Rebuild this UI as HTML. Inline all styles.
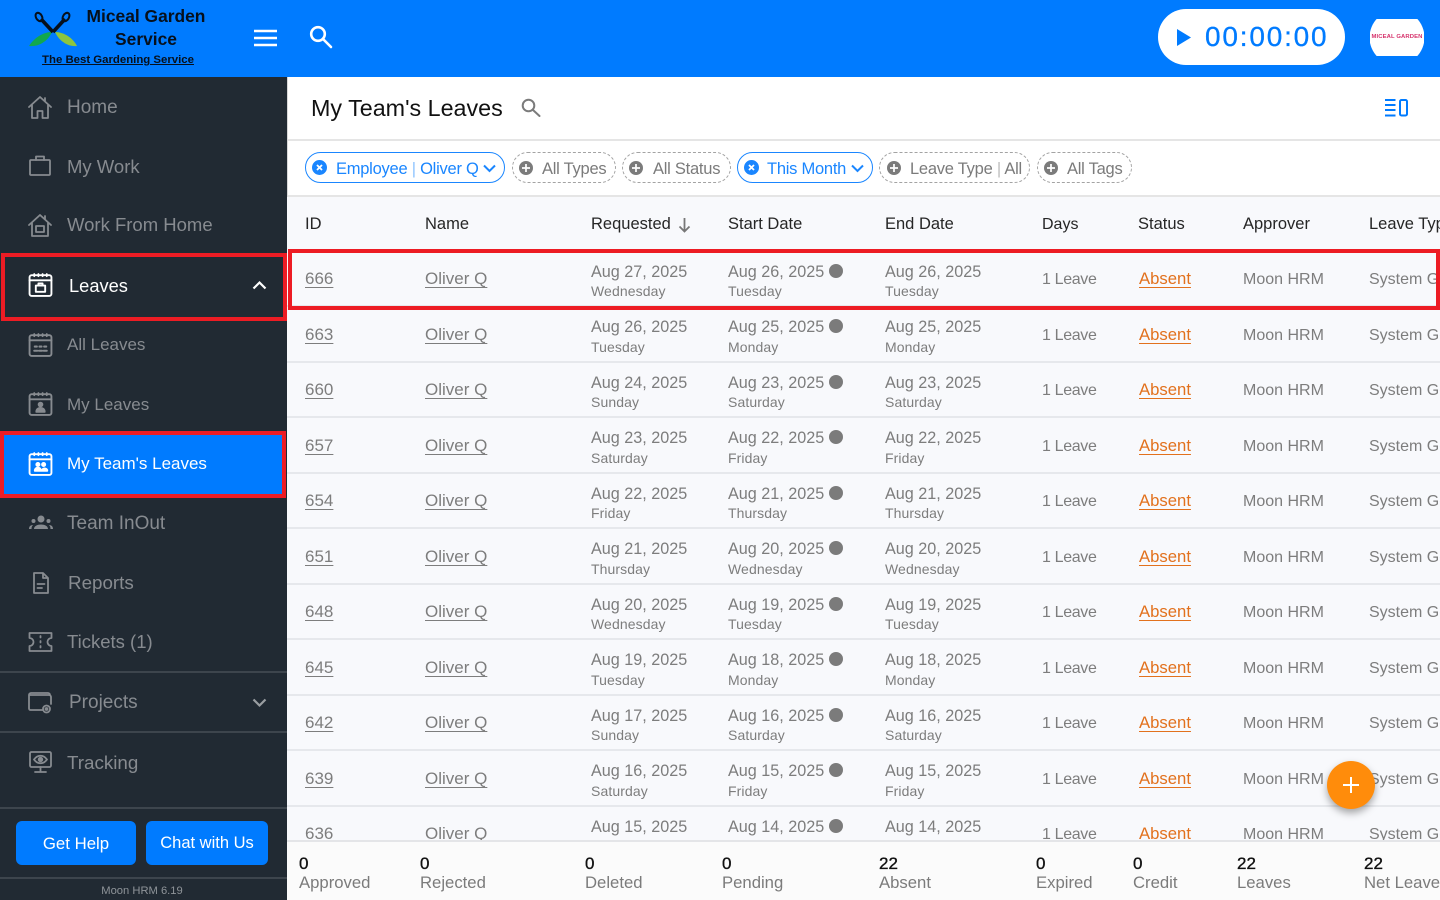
<!DOCTYPE html>
<html lang="en">
<head>
<meta charset="utf-8">
<title>My Team's Leaves</title>
<style>
*{box-sizing:border-box}
html,body{margin:0;padding:0;width:1440px;height:900px;overflow:hidden;background:#fff;font-family:"Liberation Sans",sans-serif}
.a{position:absolute}
#top{left:0;top:0;width:1440px;height:77px;background:#007bff}
.lg{left:60px;width:172px;text-align:center;color:#06101c;font-weight:700;font-size:17.4px;line-height:22px;white-space:nowrap}
#timer{left:1158px;top:9px;width:187px;height:56px;border-radius:28px;background:#fff}
#clock{left:1205px;top:20px;color:#007bff;font-size:28px;line-height:34px;letter-spacing:1.8px;white-space:nowrap;-webkit-text-stroke:.3px #007bff}
#side{left:0;top:77px;width:287px;height:823px;background:#212a33}
.n{position:absolute;color:#878b90;font-size:18.5px;line-height:24px;white-space:nowrap}
.w{color:#fff}
.sl{position:absolute;left:0;width:287px;height:2px;background:#3d454d}
.btn{position:absolute;top:821px;height:44px;background:#007bff;border-radius:6px;color:#fff;line-height:45px;text-align:center;white-space:nowrap}
.ic{position:absolute;fill:none;stroke:#878b90;stroke-width:1.8;stroke-linecap:round;stroke-linejoin:round}
.iw{stroke:#fff}
.chip{position:absolute;top:152px;height:31px;border-radius:16px;border:1.5px dashed #a3a3a3}
.on{border:1.5px solid #1a86ff}
.ct{position:absolute;top:159px;font-size:16.5px;letter-spacing:-.25px;line-height:20px;color:#7b7b7b;white-space:nowrap}
.cb{color:#1a86ff}
.th{position:absolute;top:214px;font-size:16.5px;line-height:20px;color:#262626;white-space:nowrap}
#t{left:287px;top:197px;width:1153px;height:643px;overflow:hidden;background:#f8f9fc}
.r{position:absolute;left:0;width:1153px;height:56px;border-bottom:2px solid #e6e8ec}
.r span,.r a{position:absolute;white-space:nowrap}
.m{top:19px;line-height:20px;font-size:16px;color:#7d7d7d}
.u{top:18px;font-size:17px;text-decoration:underline;text-underline-offset:3px;text-decoration-thickness:1px}
.s{color:#e2711d;left:852px;font-size:16.7px}
.d{top:10px;line-height:20px;font-size:16.2px;color:#7d7d7d}
.r.x .d{top:11px}
.e{top:31px;line-height:18px;font-size:14px;color:#7d7d7d;letter-spacing:.1px}
.o{display:inline-block;width:14px;height:14px;border-radius:50%;background:#7b7b7b;margin-left:5px;vertical-align:-1px}
.c1{left:18px}.c2{left:138px}.c3{left:304px}.c4{left:441px}.c5{left:598px}.c6{left:755px;letter-spacing:-.35px}.c8{left:956px}.c9{left:1082px}
#foot{left:287px;top:840px;width:1153px;height:60px;background:#fbfbfb;border-top:2px solid #e4e5e8}
.fn{position:absolute;top:854px;font-size:17px;line-height:20px;color:#111;white-space:nowrap;-webkit-text-stroke:.35px #111}
.fl{position:absolute;top:873px;font-size:16.7px;line-height:20px;color:#7b7b7b;white-space:nowrap}
.box{position:absolute;border:4px solid #ed1c24;pointer-events:none}
#fab{left:1327px;top:761px;width:48px;height:48px;border-radius:50%;background:#ff8c0b;box-shadow:0 4px 8px rgba(0,0,0,.35)}
</style>
</head>
<body>
<svg width="0" height="0" style="position:absolute">
<defs>
<g id="cal"><rect x="1.5" y="3" width="21" height="20" rx="2"/><path d="M1.5 8h21M6 2v2M10 2v2M14 2v2M18 2v2"/></g>
</defs>
</svg>

<div class="a" id="top"></div>
<svg class="a" style="left:28px;top:10px" width="52" height="38" viewBox="0 0 52 38">
<path d="M1 36C6 28 15 22 24 22 20 31 11 37 1 36Z" fill="#12a84f"/>
<path d="M49 36C45 28 36 22 27 22 31 31 40 37 49 36Z" fill="#8cc63f"/>
<path d="M13 9 25 22M37 9 25 22" stroke="#06101c" stroke-width="3.6" fill="none"/>
<ellipse cx="11" cy="7" rx="3" ry="4.500" fill="none" stroke="#06101c" stroke-width="2" transform="rotate(-30 11 7)"/>
<ellipse cx="38" cy="7" rx="3" ry="4.500" fill="none" stroke="#06101c" stroke-width="2" transform="rotate(30 38 7)"/>
</svg>
<div class="a lg" style="top:5px">Miceal Garden</div>
<div class="a lg" style="top:28px">Service</div>
<div class="a lg" style="left:32px;top:53px;font-size:11.400px;line-height:14px;text-decoration:underline">The Best Gardening Service</div>
<svg class="a" style="left:254px;top:29px" width="24" height="18" viewBox="0 0 24 18"><path d="M0 2h23M0 9h23M0 16h23" stroke="#fff" stroke-width="2.4"/></svg>
<svg class="a" style="left:309px;top:25px" width="24" height="24" viewBox="0 0 24 24" fill="none" stroke="#fff" stroke-width="2.6"><circle cx="9" cy="9" r="6.8"/><path d="M14 14l8 8" stroke-linecap="round"/></svg>
<div class="a" id="timer"></div>
<svg class="a" style="left:1177px;top:29px" width="14" height="17" viewBox="0 0 14 17"><path d="M0 0l14 8.5L0 17z" fill="#007bff"/></svg>
<div class="a" id="clock">00:00:00</div>
<div class="a" style="left:1370px;top:19px;width:54px;height:37px;background:#fff;clip-path:circle(27.500px at 50% 50%);color:#d6336c;font-size:5.900px;font-weight:700;line-height:37px;text-align:center;white-space:nowrap;letter-spacing:.1px;overflow:hidden">MICEAL GARDEN</div>

<div class="a" id="side"></div>
<div class="a" style="left:287px;top:77px;width:1px;height:823px;background:#d8d8d8"></div>

<svg class="ic" style="left:28px;top:95px" width="24" height="24" viewBox="0 0 24 24"><path d="M1 12 12 2l11 10M4 10v13h5.500v-7h5v7H20V10M17 3v3"/></svg>
<div class="n" style="left:67px;top:96px;font-size:19px">Home</div>
<svg class="ic" style="left:29px;top:155px" width="22" height="22" viewBox="0 0 22 22"><rect x="1" y="5" width="20" height="15" rx="1"/><path d="M7 5V1.500h8V5"/></svg>
<div class="n" style="left:67px;top:155px">My Work</div>
<svg class="ic" style="left:28px;top:213px" width="24" height="24" viewBox="0 0 24 24"><path d="M1 12 12 2l11 10M4 10v13h16V10M8 13h8v6H8zM17 3v3"/></svg>
<div class="n" style="left:67px;top:213px">Work From Home</div>

<svg class="ic iw" style="left:28px;top:272px" width="25" height="25" viewBox="0 0 24 24"><use href="#cal"/><path d="M7.500 13h9v6h-9zM10 13v-2h4v2"/></svg>
<div class="n w" style="left:69px;top:274px;font-size:18.300px">Leaves</div>
<svg class="a" style="left:252px;top:280px" width="15" height="11" viewBox="0 0 15 11"><path d="M1.500 8.500 7.500 2.500l6 6" fill="none" stroke="#fff" stroke-width="2.200"/></svg>
<div class="box" style="left:1px;top:253px;width:286px;height:68px"></div>

<svg class="ic" style="left:28px;top:332px" width="25" height="25" viewBox="0 0 24 24"><use href="#cal"/><path d="M6 18h3M10.500 18h3M15 18h3M6.500 14h2M11 14h2M15.500 14h2" stroke-width="2"/></svg>
<div class="n" style="left:67px;top:333px;font-size:17px">All Leaves</div>
<svg class="ic" style="left:28px;top:391px" width="25" height="25" viewBox="0 0 24 24"><use href="#cal"/><circle cx="12" cy="13" r="1.800" fill="#878b90"/><path d="M8 20c0-5 8-5 8 0z" fill="#878b90"/></svg>
<div class="n" style="left:67px;top:393px;font-size:17px">My Leaves</div>

<div class="a" style="left:0;top:431px;width:286px;height:67px;background:#007bff;border:4px solid #ed1c24"></div>
<svg class="ic iw" style="left:28px;top:451px" width="25" height="25" viewBox="0 0 24 24"><use href="#cal"/><circle cx="9.500" cy="13" r="1.500" fill="#fff"/><circle cx="15" cy="13" r="1.500" fill="#fff"/><path d="M6.500 19c0-4 6-4 6 0zM13.500 19c0-3 5-3 5 0z" fill="#fff"/></svg>
<div class="n w" style="left:67px;top:452px;font-size:17px">My Team's Leaves</div>

<svg class="ic" style="left:29px;top:514px;stroke-width:0;fill:#878b90" width="24" height="18" viewBox="0 0 24 18"><circle cx="12" cy="5" r="3.500"/><circle cx="4.500" cy="7" r="2"/><circle cx="19.500" cy="7" r="2"/><path d="M5 15c0-6 14-6 14 0zM0 15c0-3 2-4 4-4-1 1-1.500 2-1.500 4zM24 15c0-3-2-4-4-4 1 1 1.500 2 1.500 4z"/></svg>
<div class="n" style="left:67px;top:512px;font-size:19px">Team InOut</div>
<svg class="ic" style="left:32px;top:572px" width="18" height="22" viewBox="0 0 18 22"><path d="M2 1h9l5 5v15H2zM11 1v5h5M5.500 12h7M5.500 16h4.500"/></svg>
<div class="n" style="left:68px;top:571px;font-size:18.800px">Reports</div>
<svg class="ic" style="left:28px;top:631px" width="25" height="22" viewBox="0 0 25 22"><path d="M1.500 2h22v5a4 4 0 0 0 0 8v5h-22v-5a4 4 0 0 0 0-8zM12.500 5v1.500M12.500 10v1.500M12.500 15v1.500"/></svg>
<div class="n" style="left:67px;top:630px">Tickets (1)</div>
<div class="sl" style="top:671px"></div>
<svg class="ic" style="left:28px;top:691px" width="25" height="23" viewBox="0 0 25 23"><path d="M15 19H2.500A1.500 1.500 0 0 1 1 17.500V4h20a2 2 0 0 1 2 2v7M1 4a2 2 0 0 1 2-2h17a2 2 0 0 1 2 2"/><circle cx="18.500" cy="18" r="3.500"/><circle cx="18.500" cy="18" r="1"/></svg>
<div class="n" style="left:69px;top:691px;font-size:19px">Projects</div>
<svg class="a" style="left:252px;top:697px" width="15" height="11" viewBox="0 0 15 11"><path d="M1.500 2.500 7.500 8.500l6-6" fill="none" stroke="#9a9ea2" stroke-width="2.200"/></svg>
<div class="sl" style="top:731px"></div>
<svg class="ic" style="left:29px;top:751px" width="23" height="23" viewBox="0 0 23 23"><rect x="1" y="1" width="21" height="15" rx="1.500"/><path d="M11.500 16v4M6 21h11M5 8.500c3.500-5 9.500-5 13 0-3.500 5-9.500 5-13 0z"/><circle cx="11.500" cy="8.500" r="1.800" fill="#878b90"/></svg>
<div class="n" style="left:67px;top:751px;font-size:18.800px">Tracking</div>
<div class="sl" style="top:807px"></div>
<div class="btn" style="left:16px;width:120px;font-size:16.800px">Get Help</div>
<div class="btn" style="left:146px;width:122px;font-size:16.500px">Chat with Us</div>
<div class="sl" style="top:877px"></div>
<div class="a" style="left:0;top:884px;width:284px;text-align:center;color:#8f9499;font-size:11.200px;line-height:15px">Moon HRM 6.19</div>

<div class="a" style="left:311px;top:93px;font-size:23.300px;line-height:30px;color:#111;white-space:nowrap">My Team's Leaves</div>
<svg class="a" style="left:521px;top:98px" width="20" height="19" viewBox="0 0 20 19" fill="none" stroke="#7b7b7b" stroke-width="2"><circle cx="7.500" cy="7.500" r="5.800"/><path d="M12 12l6.500 6" stroke-linecap="round"/></svg>
<svg class="a" style="left:1385px;top:99px" width="23" height="18" viewBox="0 0 23 18" fill="none" stroke="#007bff" stroke-width="2"><path d="M0 1h10.500M0 6h10.500M0 11h10.500M0 16.500h10.500"/><rect x="15" y="1" width="7" height="15.500" rx="1.500"/></svg>
<div class="a" style="left:288px;top:139px;width:1152px;height:2px;background:#e5e5e5"></div>

<div class="chip on" style="left:305px;width:200px"></div>
<svg class="a" style="left:312px;top:160px" width="15" height="15" viewBox="0 0 15 15"><circle cx="7.500" cy="7.500" r="7.500" fill="#1a86ff"/><path d="M5 5l5 5M10 5l-5 5" stroke="#fff" stroke-width="1.800"/></svg>
<div class="ct cb" style="left:336px">Employee <span style="opacity:.5">|</span> Oliver Q</div>
<svg class="a" style="left:483px;top:164px" width="13" height="9" viewBox="0 0 13 9"><path d="M1 1.500l5.500 5.500L12 1.500" fill="none" stroke="#1a86ff" stroke-width="2"/></svg>
<div class="chip" style="left:512px;width:104px"></div>
<svg class="a" style="left:519px;top:161px" width="14" height="14" viewBox="0 0 14 14"><circle cx="7" cy="7" r="7" fill="#7b7b7b"/><path d="M7 3v8M3 7h8" stroke="#fff" stroke-width="1.700"/></svg>
<div class="ct" style="left:542px">All Types</div>
<div class="chip" style="left:622px;width:109px"></div>
<svg class="a" style="left:629px;top:161px" width="14" height="14" viewBox="0 0 14 14"><circle cx="7" cy="7" r="7" fill="#7b7b7b"/><path d="M7 3v8M3 7h8" stroke="#fff" stroke-width="1.700"/></svg>
<div class="ct" style="left:653px">All Status</div>
<div class="chip on" style="left:737px;width:136px"></div>
<svg class="a" style="left:744px;top:160px" width="15" height="15" viewBox="0 0 15 15"><circle cx="7.500" cy="7.500" r="7.500" fill="#1a86ff"/><path d="M5 5l5 5M10 5l-5 5" stroke="#fff" stroke-width="1.800"/></svg>
<div class="ct cb" style="left:767px">This Month</div>
<svg class="a" style="left:851px;top:164px" width="13" height="9" viewBox="0 0 13 9"><path d="M1 1.500l5.500 5.500L12 1.500" fill="none" stroke="#1a86ff" stroke-width="2"/></svg>
<div class="chip" style="left:879px;width:151px"></div>
<svg class="a" style="left:887px;top:161px" width="14" height="14" viewBox="0 0 14 14"><circle cx="7" cy="7" r="7" fill="#7b7b7b"/><path d="M7 3v8M3 7h8" stroke="#fff" stroke-width="1.700"/></svg>
<div class="ct" style="left:910px">Leave Type <span style="opacity:.5">|</span> All</div>
<div class="chip" style="left:1037px;width:95px"></div>
<svg class="a" style="left:1044px;top:161px" width="14" height="14" viewBox="0 0 14 14"><circle cx="7" cy="7" r="7" fill="#7b7b7b"/><path d="M7 3v8M3 7h8" stroke="#fff" stroke-width="1.700"/></svg>
<div class="ct" style="left:1067px">All Tags</div>
<div class="a" style="left:288px;top:195px;width:1152px;height:2px;background:#e5e5e5"></div>

<div class="a" id="t">
<div class="r x" style="top:54px"><a class="m u c1">666</a><a class="m u c2">Oliver Q</a><span class="d c3">Aug 27, 2025</span><span class="e c3">Wednesday</span><span class="d c4">Aug 26, 2025<i class="o"></i></span><span class="e c4">Tuesday</span><span class="d c5">Aug 26, 2025</span><span class="e c5">Tuesday</span><span class="m c6">1 Leave</span><a class="m u s">Absent</a><span class="m c8">Moon HRM</span><span class="m c9">System Generated</span></div>
<div class="r" style="top:110px"><a class="m u c1">663</a><a class="m u c2">Oliver Q</a><span class="d c3">Aug 26, 2025</span><span class="e c3">Tuesday</span><span class="d c4">Aug 25, 2025<i class="o"></i></span><span class="e c4">Monday</span><span class="d c5">Aug 25, 2025</span><span class="e c5">Monday</span><span class="m c6">1 Leave</span><a class="m u s">Absent</a><span class="m c8">Moon HRM</span><span class="m c9">System Generated</span></div>
<div class="r x" style="top:165px"><a class="m u c1">660</a><a class="m u c2">Oliver Q</a><span class="d c3">Aug 24, 2025</span><span class="e c3">Sunday</span><span class="d c4">Aug 23, 2025<i class="o"></i></span><span class="e c4">Saturday</span><span class="d c5">Aug 23, 2025</span><span class="e c5">Saturday</span><span class="m c6">1 Leave</span><a class="m u s">Absent</a><span class="m c8">Moon HRM</span><span class="m c9">System Generated</span></div>
<div class="r" style="top:221px"><a class="m u c1">657</a><a class="m u c2">Oliver Q</a><span class="d c3">Aug 23, 2025</span><span class="e c3">Saturday</span><span class="d c4">Aug 22, 2025<i class="o"></i></span><span class="e c4">Friday</span><span class="d c5">Aug 22, 2025</span><span class="e c5">Friday</span><span class="m c6">1 Leave</span><a class="m u s">Absent</a><span class="m c8">Moon HRM</span><span class="m c9">System Generated</span></div>
<div class="r x" style="top:276px"><a class="m u c1">654</a><a class="m u c2">Oliver Q</a><span class="d c3">Aug 22, 2025</span><span class="e c3">Friday</span><span class="d c4">Aug 21, 2025<i class="o"></i></span><span class="e c4">Thursday</span><span class="d c5">Aug 21, 2025</span><span class="e c5">Thursday</span><span class="m c6">1 Leave</span><a class="m u s">Absent</a><span class="m c8">Moon HRM</span><span class="m c9">System Generated</span></div>
<div class="r" style="top:332px"><a class="m u c1">651</a><a class="m u c2">Oliver Q</a><span class="d c3">Aug 21, 2025</span><span class="e c3">Thursday</span><span class="d c4">Aug 20, 2025<i class="o"></i></span><span class="e c4">Wednesday</span><span class="d c5">Aug 20, 2025</span><span class="e c5">Wednesday</span><span class="m c6">1 Leave</span><a class="m u s">Absent</a><span class="m c8">Moon HRM</span><span class="m c9">System Generated</span></div>
<div class="r x" style="top:387px"><a class="m u c1">648</a><a class="m u c2">Oliver Q</a><span class="d c3">Aug 20, 2025</span><span class="e c3">Wednesday</span><span class="d c4">Aug 19, 2025<i class="o"></i></span><span class="e c4">Tuesday</span><span class="d c5">Aug 19, 2025</span><span class="e c5">Tuesday</span><span class="m c6">1 Leave</span><a class="m u s">Absent</a><span class="m c8">Moon HRM</span><span class="m c9">System Generated</span></div>
<div class="r" style="top:443px"><a class="m u c1">645</a><a class="m u c2">Oliver Q</a><span class="d c3">Aug 19, 2025</span><span class="e c3">Tuesday</span><span class="d c4">Aug 18, 2025<i class="o"></i></span><span class="e c4">Monday</span><span class="d c5">Aug 18, 2025</span><span class="e c5">Monday</span><span class="m c6">1 Leave</span><a class="m u s">Absent</a><span class="m c8">Moon HRM</span><span class="m c9">System Generated</span></div>
<div class="r x" style="top:498px"><a class="m u c1">642</a><a class="m u c2">Oliver Q</a><span class="d c3">Aug 17, 2025</span><span class="e c3">Sunday</span><span class="d c4">Aug 16, 2025<i class="o"></i></span><span class="e c4">Saturday</span><span class="d c5">Aug 16, 2025</span><span class="e c5">Saturday</span><span class="m c6">1 Leave</span><a class="m u s">Absent</a><span class="m c8">Moon HRM</span><span class="m c9">System Generated</span></div>
<div class="r" style="top:554px"><a class="m u c1">639</a><a class="m u c2">Oliver Q</a><span class="d c3">Aug 16, 2025</span><span class="e c3">Saturday</span><span class="d c4">Aug 15, 2025<i class="o"></i></span><span class="e c4">Friday</span><span class="d c5">Aug 15, 2025</span><span class="e c5">Friday</span><span class="m c6">1 Leave</span><a class="m u s">Absent</a><span class="m c8">Moon HRM</span><span class="m c9">System Generated</span></div>
<div class="r x" style="top:609px"><a class="m u c1">636</a><a class="m u c2">Oliver Q</a><span class="d c3">Aug 15, 2025</span><span class="e c3">Friday</span><span class="d c4">Aug 14, 2025<i class="o"></i></span><span class="e c4">Thursday</span><span class="d c5">Aug 14, 2025</span><span class="e c5">Thursday</span><span class="m c6">1 Leave</span><a class="m u s">Absent</a><span class="m c8">Moon HRM</span><span class="m c9">System Generated</span></div>
</div>

<div class="th" style="left:305px">ID</div>
<div class="th" style="left:425px">Name</div>
<div class="th" style="left:591px">Requested</div>
<svg class="a" style="left:678px;top:217px" width="13" height="16" viewBox="0 0 13 16"><path d="M6.500 1v13M1.500 9.500l5 5 5-5" fill="none" stroke="#777" stroke-width="1.800"/></svg>
<div class="th" style="left:728px">Start Date</div>
<div class="th" style="left:885px">End Date</div>
<div class="th" style="left:1042px;top:215px;font-size:16px">Days</div>
<div class="th" style="left:1138px">Status</div>
<div class="th" style="left:1243px">Approver</div>
<div class="th" style="left:1369px">Leave Type</div>

<div class="box" style="left:288px;top:249px;width:1152px;height:61px"></div>

<div class="a" id="foot"></div>
<div class="fn" style="left:299px">0</div><div class="fl" style="left:299px">Approved</div>
<div class="fn" style="left:420px">0</div><div class="fl" style="left:420px">Rejected</div>
<div class="fn" style="left:585px">0</div><div class="fl" style="left:585px">Deleted</div>
<div class="fn" style="left:722px">0</div><div class="fl" style="left:722px">Pending</div>
<div class="fn" style="left:879px">22</div><div class="fl" style="left:879px">Absent</div>
<div class="fn" style="left:1036px">0</div><div class="fl" style="left:1036px">Expired</div>
<div class="fn" style="left:1133px">0</div><div class="fl" style="left:1133px">Credit</div>
<div class="fn" style="left:1237px">22</div><div class="fl" style="left:1237px">Leaves</div>
<div class="fn" style="left:1364px">22</div><div class="fl" style="left:1364px">Net Leaves</div>

<div class="a" id="fab"></div>
<svg class="a" style="left:1342px;top:776px" width="18" height="18" viewBox="0 0 18 18"><path d="M9 1v16M1 9h16" stroke="#fff" stroke-width="2"/></svg>
</body>
</html>
